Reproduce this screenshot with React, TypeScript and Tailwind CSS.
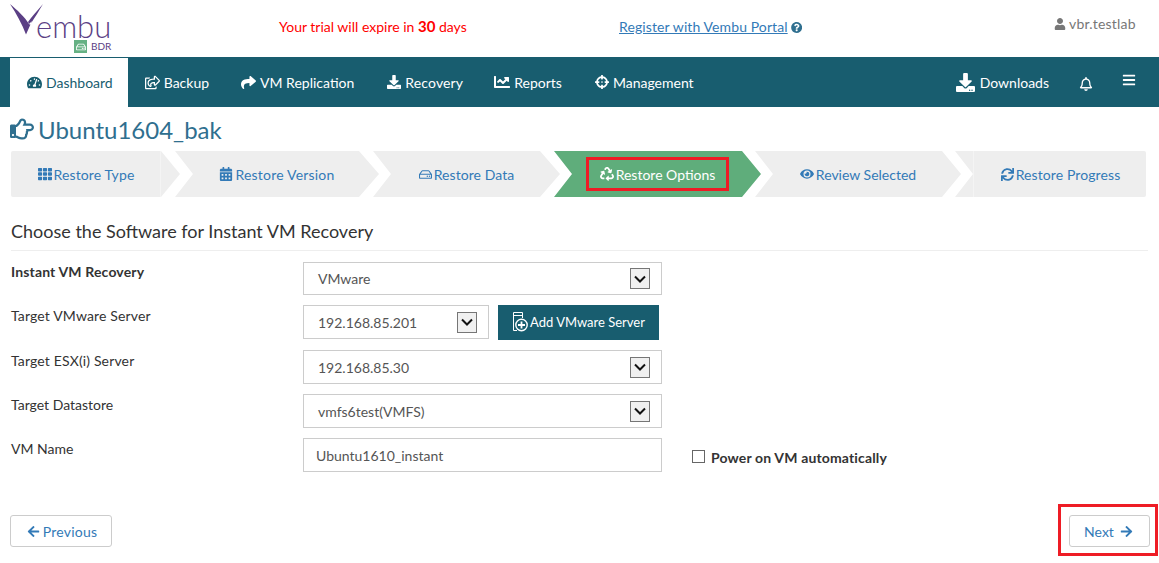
import React from "react";
import {
  FaTachometerAlt, FaRegShareSquare, FaShare, FaDownload, FaChartLine, FaCrosshairs, FaRegBell, FaBars,
  FaUser, FaQuestionCircle, FaRegHandPointRight, FaTh, FaCalendarAlt, FaRegHdd, FaRecycle, FaEye, FaSync,
  FaArrowLeft, FaArrowRight,
} from "react-icons/fa";

function Logo() {
  return (
    <div className="relative w-[110px] h-[56px] ml-[10px] text-[#5b3f85]">
      <svg className="absolute left-0 top-0" width="46" height="38" viewBox="0 0 46 38">
        <path d="M0 4 C7 10 15 17 19 24 L22 21 L16 34.5 C12 24 6 13 0 4 Z M33 4 C27 11 22 16 18 22 L20 25 C25 17 29 11 33 4 Z" fill="#5b3f85" />
      </svg>
      <span className="absolute left-[26px] top-[13px] text-[31px] leading-[26px] font-light">embu</span>
      <div className="absolute left-[64px] top-[40px] w-[13px] h-[13px] bg-[#66b184] flex items-center justify-center">
        <FaRegHdd className="text-white text-[10px]" />
      </div>
      <span className="absolute left-[81px] top-[40px] text-[10px] leading-[13px]">BDR</span>
    </div>
  );
}

const navItems = [
  { icon: <FaRegShareSquare className="text-[15px]" />, label: "Backup", iw: "w-[19px]", cls: "pr-[15px]" },
  { icon: <FaShare className="text-[15px]" />, label: "VM Replication", iw: "w-[19px]", cls: "pr-[16px]" },
  { icon: <FaDownload className="text-[14px]" />, label: "Recovery", iw: "w-[18px]", cls: "pr-[14px] tracking-[0.15px]" },
  { icon: <FaChartLine className="text-[16px]" />, label: "Reports", iw: "w-[20px]", cls: "pr-[16px]" },
  { icon: <FaCrosshairs className="text-[14px]" />, label: "Management", iw: "w-[18px]", cls: "pr-[15px]" },
];

const steps = [
  { icon: <FaTh className="text-[14px]" />, label: "Restore Type", line: "left-[149px]", cls: "w-[169px] pr-[19px] tracking-[0.1px] [clip-path:polygon(0_0,150px_0,100%_50%,150px_100%,0_100%)] rounded-l-[2px]" },
  { icon: <FaCalendarAlt className="text-[14px]" />, label: "Restore Version", cls: "w-[204px] -ml-[5px] tracking-[0.2px] [clip-path:polygon(0_0,184px_0,100%_50%,184px_100%,0_100%,18px_50%)]" },
  { icon: <FaRegHdd className="text-[13px]" />, label: "Restore Data", cls: "w-[187px] -ml-[6px] tracking-[0.08px] [clip-path:polygon(0_0,167px_0,100%_50%,167px_100%,0_100%,18px_50%)]" },
  { icon: <FaRecycle className="text-[14px]" />, label: "Restore Options", active: true, cls: "w-[207px] -ml-[6px] [clip-path:polygon(0_0,188px_0,100%_50%,188px_100%,0_100%,18px_50%)]" },
  { icon: <FaEye className="text-[14px]" />, label: "Review Selected", cls: "w-[206px] -ml-[6px] [clip-path:polygon(0_0,187px_0,100%_50%,187px_100%,0_100%,18px_50%)]" },
  { icon: <FaSync className="text-[13px]" />, label: "Restore Progress", line: "left-[18px]", cls: "w-[191px] -ml-[6px] pl-[20px] tracking-[0.1px] rounded-r-[2px] [clip-path:polygon(0_0,100%_0,100%_100%,0_100%,18px_50%)]" },
];

function Select({ value, w = "w-[359px]", h = "h-[34px]" }: { value: string; w?: string; h?: string }) {
  return (
    <div className={`${w} ${h} border border-[#cccccc] bg-white flex items-center pl-[14px] pr-[11px] text-[#555555]`}>
      <span className="flex-1">{value}</span>
      <span className="w-[20px] h-[21px] border border-[#767676] bg-[#f0f0f0] flex items-center justify-center">
        <svg width="12" height="8" viewBox="0 0 12 8" fill="none" stroke="#111111" strokeWidth="2">
          <path d="M1 1.5 L6 6.5 L11 1.5" />
        </svg>
      </span>
    </div>
  );
}

function Label({ children, cls = "" }: { children: React.ReactNode; cls?: string }) {
  return <div className={`w-[292px] pt-[1px] leading-[20px] text-[#333333] ${cls}`}>{children}</div>;
}

export default function App() {
  return (
    <div className="w-[1159px] h-[563px] overflow-hidden bg-white text-[14px] font-['Lato','Liberation_Sans',sans-serif]">
      <header className="h-[57px] flex items-start">
        <Logo />
        <div className="ml-[159px] mt-[16px] text-[#ff0000] leading-[20px] w-[188px] whitespace-nowrap">
          Your trial will expire in <b className="text-[15px]">30</b> days
        </div>
        <div className="ml-[152px] mt-[17px] flex items-center leading-[20px] text-[#337ab7] w-[183px] whitespace-nowrap">
          <span className="underline tracking-[0.1px]">Register with Vembu Portal</span>
          <FaQuestionCircle className="ml-[3px] text-[13px] text-[#2f6f8f]" />
        </div>
        <div className="ml-[252px] mt-[14px] flex items-center leading-[20px] text-[#777777] whitespace-nowrap">
          <FaUser className="text-[12px] mr-[3px]" />
          <span className="tracking-[0.2px]">vbr.testlab</span>
        </div>
      </header>

      <nav className="h-[50px] bg-[#185d6f] flex items-stretch pl-[10px] text-white">
        <div className="mt-[1px] bg-white text-[#185d6f] flex items-center pl-[17px] pr-[15px]">
          <span className="w-[19px]"><FaTachometerAlt className="text-[15px]" /></span>
          Dashboard
        </div>
        {navItems.map((n) => (
          <div key={n.label} className={`flex items-center pl-[17px] ${n.cls}`}>
            <span className={n.iw}>{n.icon}</span>
            {n.label}
          </div>
        ))}
        <div className="ml-auto flex items-center">
          <FaDownload className="text-[19px] mr-[5px]" />
          <span>Downloads</span>
          <FaRegBell className="ml-[30px] mt-[3px] text-[14px]" />
          <FaBars className="ml-[29px] mr-[23px] -mt-[5px] text-[14px]" />
        </div>
      </nav>

      <h1 className="h-[44px] pl-[10px] pt-[2px] flex items-center text-[24px] leading-[30px] text-[#2f6f8f] font-normal">
        <FaRegHandPointRight className="text-[24px] mr-[4px] -mt-[2px]" />
        Ubuntu1604_bak
      </h1>

      <div className="flex h-[46px] ml-[11px]">
        {steps.map((s) => (
          <div
            key={s.label}
            className={`${s.cls} relative ${s.active ? "bg-[#5fad7b] text-white" : "bg-[#eeeeee] text-[#337ab7]"} flex items-center justify-center shrink-0`}
          >
            {s.line && <span className={`absolute top-0 bottom-0 w-[1px] bg-[#f4f4f4] ${s.line}`} />}
            <span className={`flex items-center gap-[2px] ${s.active ? "border-[3px] border-[#ee1c25] w-[143px] h-[34px] justify-center" : ""}`}>
              {s.icon}
              {s.label}
            </span>
          </div>
        ))}
      </div>

      <h2 className="mt-[21px] mx-[11px] h-[33px] border-b border-[#eeeeee] text-[18px] leading-[26px] text-[#333333] font-normal">
        Choose the Software for Instant VM Recovery
      </h2>

      <div className="mt-[11px] ml-[11px] flex flex-col gap-[10px]">
        <div className="flex">
          <Label cls="font-bold tracking-[0.15px] !pt-0">Instant VM Recovery</Label>
          <Select value="VMware" h="h-[33px]" />
        </div>
        <div className="flex">
          <Label cls="tracking-[0.15px]">Target VMware Server</Label>
          <Select value="192.168.85.201" w="w-[186px]" />
          <button className="ml-[9px] w-[161px] h-[35px] bg-[#185d6f] text-white text-[13px] flex items-center justify-center">
            <svg width="16" height="21" viewBox="0 0 16 21" fill="none" stroke="white" strokeWidth="1" className="mr-[2px] shrink-0">
              <path d="M1.5 0.5 H10.5 V6 M1.5 0.5 V18.5 H5 M1.5 3.5 H10.5" />
              <circle cx="9.5" cy="13" r="5.7" strokeWidth="1.4" />
              <path d="M9.5 9.5 V16.5 M6 13 H13" strokeWidth="1.8" />
            </svg>
            <span>Add VMware Server</span>
          </button>
        </div>
        <div className="flex">
          <Label cls="tracking-[0.15px]">Target ESX(i) Server</Label>
          <Select value="192.168.85.30" />
        </div>
        <div className="flex">
          <Label>Target Datastore</Label>
          <Select value="vmfs6test(VMFS)" />
        </div>
        <div className="flex">
          <Label>VM Name</Label>
          <div className="w-[359px] h-[34px] border border-[#cccccc] flex items-center pl-[12px] text-[#555555]">Ubuntu1610_instant</div>
          <div className="ml-[30px] mt-[9px] flex items-center h-[20px] text-[#333333] font-bold tracking-[0.15px]">
            <span className="w-[13px] h-[13px] border border-[#666666] bg-white mr-[6px] -mt-[2px]" />
            Power on VM automatically
          </div>
        </div>
      </div>

      <div className="mt-[32px] flex justify-between items-start pl-[10px] pr-[1px]">
        <button className="mt-[11px] w-[102px] h-[32px] pl-[2px] border border-[#cccccc] rounded-[3px] text-[#337ab7] flex items-center justify-center gap-[3px] tracking-[0.2px]">
          <FaArrowLeft className="text-[13px]" />
          Previous
        </button>
        <div className="border-[3px] border-[#ee1c25] pl-[8px] pr-[5px] pt-[8px] pb-[6px]">
          <button className="w-[81px] h-[32px] pr-[2px] border border-[#cccccc] rounded-[3px] text-[#337ab7] flex items-center justify-center gap-[6px]">
            Next
            <FaArrowRight className="text-[13px]" />
          </button>
        </div>
      </div>
    </div>
  );
}
